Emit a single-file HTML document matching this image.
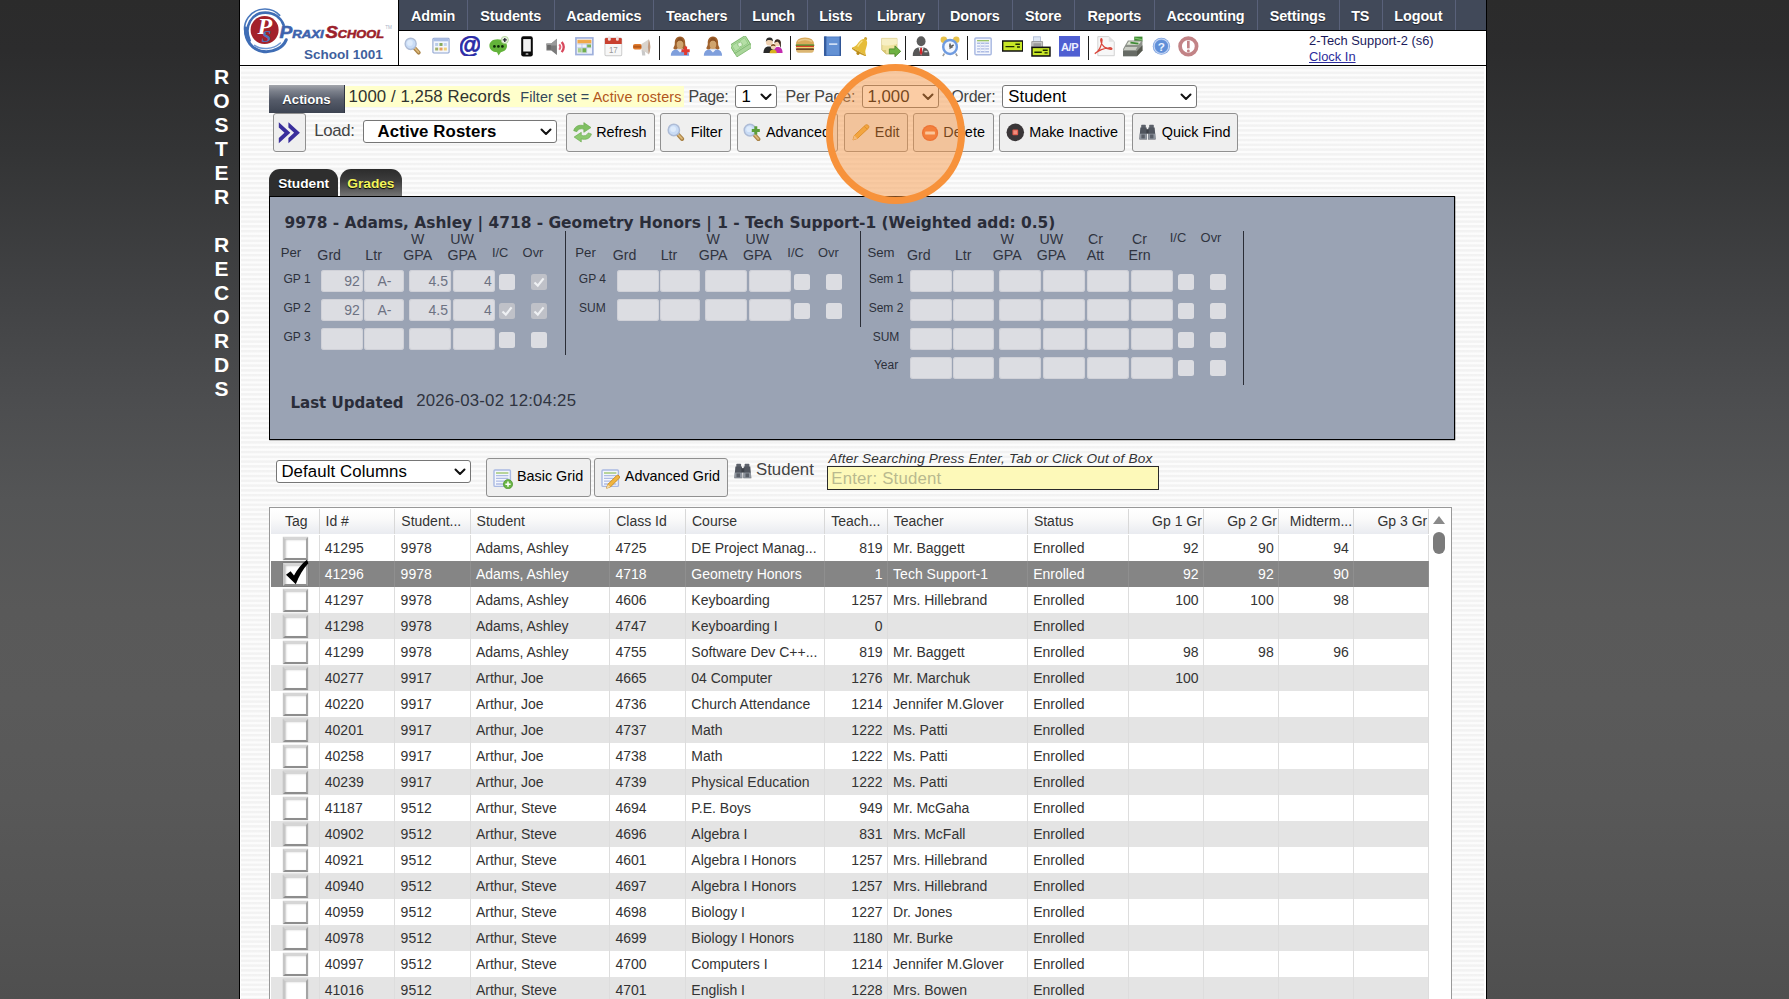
<!DOCTYPE html><html><head><meta charset="utf-8"><title>Roster Records</title><style>
*{box-sizing:border-box}
html,body{margin:0;padding:0}
body{width:1789px;height:999px;overflow:hidden;position:relative;
 font-family:"Liberation Sans",sans-serif;color:#333;
 background:linear-gradient(to bottom,#2b2b2b 0,#2c2c2d 50px,#333435 150px,#424345 300px,#4c4d4f 400px,#545556 500px,#595959 610px,#5a5a5a 700px,#585858 800px,#545454 900px,#4f4f4f 999px);}
.abs,.abs-all *{position:absolute}
div,span,svg,i,b{position:absolute;white-space:nowrap}
#wrap{left:239px;top:0;width:1248px;height:999px;border-left:1px solid #000;border-right:1px solid #000;
 background:#fff repeating-linear-gradient(to bottom,#f2f2f2 0,#f3f3f3 1.6px,#fcfcfc 2.6px,#fcfcfc 4px,#f2f2f2 4.8px);}
#wrapin{left:240px;top:66px;width:1px;height:933px;background:#fff}
#wrapin2{left:1484px;top:66px;width:2px;height:933px;background:#fff}
#hdr{left:240px;top:0;width:1246px;height:66px;background:#fff;border-bottom:1px solid #000}
#nav{left:398px;top:0;width:1088px;height:31px;background:#414959;border-left:1px solid #000;border-bottom:1px solid #000}
#navv{left:398px;top:0;width:1px;height:65px;background:#000}
.nv{top:0;height:30px;line-height:32px;text-align:center;color:#fff;font-weight:bold;font-size:14.4px;letter-spacing:-.1px;border-right:1px solid #59617a;text-shadow:0 1px 1px rgba(0,0,0,.5)}
.sep{top:37px;width:1px;height:19px;background:#222}
.ic{width:20px;height:20px;top:36px}
.lbl{font-size:16.8px;color:#444;line-height:22px}
.lb2{font-size:16px;color:#444;line-height:22px;letter-spacing:-.4px}
.sel{background:#fff;border:1px solid #767676;border-radius:3px;height:23px;top:85px;font-size:16.8px;line-height:22px;color:#000}
.sel span{left:5px;top:0;position:absolute}
.sel svg{right:4px;top:7.3px;width:12px;height:8px}
.btn{top:113px;height:39px;background:#efefef;border:1px solid #909090;border-radius:3px;font-size:14.4px;color:#000;line-height:36px}
.btn span{top:0}
.btn svg{top:9px;width:18px;height:18px}
.gl{font-size:14.2px;color:#30343f;line-height:16px;text-align:center}
.gt{font-size:13.2px;color:#2c303a;line-height:16px;text-align:center}
.gr{font-size:12px;color:#2c303a;line-height:16px;text-align:center}
.gs{font-size:12.9px;color:#30343f;line-height:16px;text-align:center}
.gi{height:22px;background:#dcdde2;border-radius:3px;font-size:14px;color:#6d7282;line-height:22px;text-align:right;padding-right:3.4px;box-shadow:inset 0 0 0 1px rgba(200,202,210,.6)}
.gc{width:16px;height:16px;background:#dcdde2;border-radius:2.5px}
.gck{background:#bfc1c8}
.vs{width:1px;background:#2a2d36}
#grid{left:269px;top:507px;width:1183px;height:500px;background:#fff;border:1px solid #999}
.hc{top:509px;height:25px;line-height:25px;font-size:14px;color:#333;border-right:1px solid #d8d8d8;background:linear-gradient(to bottom,#fff 0,#fafafa 40%,#e9ebf0 100%)}
.row{left:271px;width:1158px;height:26px}
.row.alt{background:#e4e4e4}
.row.sel2{background:#858585}
.c{top:0;height:26px;line-height:26px;font-size:14px;color:#333;border-right:1px solid #ddd;overflow:hidden}
.sel2 .c{color:#fff;border-right-color:#8f8f8f}
.r{text-align:right;padding-right:4.3px}
.l{padding-left:5.3px}
.cb{left:12px;top:2px;width:25px;height:23px;background:#fff;border:2.5px solid;border-color:#d6d6d6 #a4a4a4 #8d8d8d #c6c6c6;box-shadow:inset 1px 1px 2px rgba(0,0,0,.22),0 0 1px rgba(0,0,0,.25)}
</style></head><body>
<div id="wrap"></div><div id="wrapin"></div><div id="wrapin2"></div>
<div id="hdr"></div>
<div id="nav"></div><div id="navv"></div>
<div class="nv" style="left:399.0px;width:69.2px">Admin</div>
<div class="nv" style="left:467.2px;width:88.1px">Students</div>
<div class="nv" style="left:554.3px;width:99.9px">Academics</div>
<div class="nv" style="left:653.2px;width:88.1px">Teachers</div>
<div class="nv" style="left:740.3px;width:67.7px">Lunch</div>
<div class="nv" style="left:807.0px;width:58.5px">Lists</div>
<div class="nv" style="left:864.5px;width:74.1px">Library</div>
<div class="nv" style="left:937.6px;width:75.6px">Donors</div>
<div class="nv" style="left:1012.2px;width:63.1px">Store</div>
<div class="nv" style="left:1074.3px;width:81.0px">Reports</div>
<div class="nv" style="left:1154.3px;width:103.4px">Accounting</div>
<div class="nv" style="left:1256.7px;width:83.0px">Settings</div>
<div class="nv" style="left:1338.7px;width:44.1px">TS</div>
<div class="nv" style="left:1381.8px;width:74.2px">Logout</div>
<svg viewBox="0 0 160 60" style="left:240px;top:4px;width:160px;height:60px"><path d="M6.2 33 C0.6 18 11 5 25 5 C31 5 36 7.2 39.6 11.4" fill="none" stroke="#4a78bd" stroke-width="1.7" stroke-linecap="round"/><path d="M9.6 36.5 C3.4 22 12 8.6 25.4 8.6 C34 8.6 41 13.6 43.6 21" fill="none" stroke="#3f6db5" stroke-width="2.6" stroke-linecap="round"/><path d="M5.6 24 C4.6 36 12 46.4 24 47.6 C34 48.4 43 43.6 46.2 35.8" fill="none" stroke="#3f6db5" stroke-width="3.1" stroke-linecap="round"/><path d="M14.6 41.4 C21 46 33 45.6 40.4 39" fill="none" stroke="#6f97d2" stroke-width="1.5" stroke-linecap="round"/><circle cx="24.6" cy="26" r="14" fill="#a3212a"/><text x="17.6" y="30" font-family="Liberation Serif, serif" font-style="italic" font-weight="bold" font-size="24" fill="#fff">P</text><text x="21.6" y="37.8" font-family="Liberation Serif, serif" font-style="italic" font-weight="bold" font-size="17.5" fill="#4f74ba">S</text><text x="39.4" y="34.4" textLength="44.4" lengthAdjust="spacingAndGlyphs" font-family="Liberation Sans, sans-serif" font-style="italic" font-weight="bold" fill="#3d63ad" stroke="#3d63ad" stroke-width=".55"><tspan font-size="16.8">P</tspan><tspan font-size="11.6">RAXI</tspan></text><text x="85.4" y="34.4" textLength="58.6" lengthAdjust="spacingAndGlyphs" font-family="Liberation Sans, sans-serif" font-style="italic" font-weight="bold" fill="#9c1f2b" stroke="#9c1f2b" stroke-width=".55"><tspan font-size="16.8">S</tspan><tspan font-size="11.6">CHOOL</tspan></text><text x="145.2" y="25.4" font-family="Liberation Sans, sans-serif" font-size="4.6" fill="#a9b4c8">TM</text></svg><div style="left:304px;top:47px;font-size:13.5px;font-weight:bold;color:#3f5f9d;line-height:16px">School 1001</div>
<svg viewBox="0 0 20 20" preserveAspectRatio="none" style="left:404.3px;top:37.1px;width:17.5px;height:17.9px"><path d="M11.6 11.8 L16.8 17.4" stroke="#a98246" stroke-width="4.4" stroke-linecap="round"/><path d="M12 12 L16.6 17" stroke="#dcb878" stroke-width="2" stroke-linecap="round"/><circle cx="7.6" cy="7.6" r="6.3" fill="#c9dcf6" stroke="#aebcd6" stroke-width="1.6"/><circle cx="6.8" cy="6.6" r="3.2" fill="#deebfb"/></svg><svg viewBox="0 0 20 20" preserveAspectRatio="none" style="left:432.0px;top:37.0px;width:18.0px;height:17.2px"><rect x="1" y="1.5" width="18" height="17" rx="1" fill="#f4f7fc" stroke="#8ea3cf" stroke-width="1.2"/><rect x="1.6" y="2" width="16.8" height="3" fill="#a9bde4"/><rect x="3.5" y="7" width="3.4" height="3.4" fill="#b8cbe8"/><rect x="8.3" y="7" width="3.4" height="3.4" fill="#86a95a"/><rect x="13.1" y="7" width="3.4" height="3.4" fill="#c5d4ee"/><rect x="3.5" y="12.3" width="3.4" height="3.4" fill="#9fb26a"/><rect x="8.3" y="12.3" width="3.4" height="3.4" fill="#e7a05b"/><rect x="13.1" y="12.3" width="3.4" height="3.4" fill="#f0d27a"/></svg><svg viewBox="0 0 20 20" preserveAspectRatio="none" style="left:459.9px;top:36.0px;width:20.0px;height:20.0px"><text x="10" y="16.5" text-anchor="middle" font-family="Liberation Sans, sans-serif" font-weight="bold" font-size="23" fill="#2b2ba6" stroke="#2b2ba6" stroke-width=".7">@</text></svg><svg viewBox="0 0 20 20" preserveAspectRatio="none" style="left:488.8px;top:36.3px;width:20.0px;height:19.7px"><path d="M8.6 3.4 C3.2 3.4 0.4 6.4 0.4 10 C0.4 13.6 3.4 16.4 8 16.6 L9.6 19.8 L11.8 16.4 C15.8 15.8 18 13.4 18 10 C18 6.4 14.2 3.4 8.6 3.4 Z" fill="#63b33a"/><circle cx="5.4" cy="10.6" r="1.35" fill="#0d2a08"/><circle cx="9.4" cy="10.6" r="1.35" fill="#0d2a08"/><circle cx="13.4" cy="10.6" r="1.35" fill="#0d2a08"/><circle cx="15.8" cy="4" r="3.6" fill="#e9f4df" stroke="#a8cf8e" stroke-width=".8"/><path d="M15.8 2 V6 M13.8 4 H17.8" stroke="#223" stroke-width="1.3"/></svg><svg viewBox="0 0 20 20" preserveAspectRatio="none" style="left:517.0px;top:35.9px;width:20.0px;height:20.7px"><rect x="4.2" y="0.3" width="11.6" height="19.6" rx="2.2" fill="#0a0a0a"/><rect x="6.2" y="3" width="7.6" height="12" fill="#f2f2f2"/><rect x="8.6" y="16.6" width="2.8" height="1.6" rx=".5" fill="#bbb"/></svg><svg viewBox="0 0 20 20" preserveAspectRatio="none" style="left:546.0px;top:36.5px;width:21.0px;height:20.0px"><path d="M0.4 6.4 H5 L10.4 1.8 V18 L5 13.6 H0.4 Z" fill="#7a7a7a"/><path d="M0.4 6.4 H5 L10.4 1.8 V8.6 H0.4 Z" fill="#9a9a9a"/><rect x="1.2" y="8" width="3.4" height="4.4" fill="#6a6a6a"/><path d="M12.6 7.4 Q14.8 10 12.6 12.8" fill="none" stroke="#e2697a" stroke-width="1.8"/><path d="M15 5 Q18.8 10 15 15.2" fill="none" stroke="#d8485c" stroke-width="2.2"/></svg><svg viewBox="0 0 20 20" preserveAspectRatio="none" style="left:575.2px;top:37.0px;width:18.8px;height:18.5px"><rect x="1" y="1" width="18" height="18" fill="#eef2fa" stroke="#9fb0dc" stroke-width="1.8"/><rect x="2.6" y="3" width="14.8" height="4" fill="#f0a84a"/><path d="M2.6 7.6 H17.4 M2.6 11.6 H17.4 M7.4 7.4 V17.4 M12.4 7.4 V17.4" stroke="#b9c7e8" stroke-width=".9"/><rect x="12.9" y="8.1" width="4.2" height="3.1" fill="#79b356"/><rect x="7.9" y="12.1" width="4.1" height="4.6" fill="#6fae4f"/><rect x="3" y="12.1" width="4" height="4.6" fill="#a9cf8f"/></svg><svg viewBox="0 0 20 20" preserveAspectRatio="none" style="left:604.2px;top:36.3px;width:18.7px;height:20.3px"><rect x="1" y="2" width="18" height="17.5" rx="1.2" fill="#f7f7f7" stroke="#c9c9c9" stroke-width="1"/><path d="M1 3.2 Q1 2 2.2 2 H17.8 Q19 2 19 3.2 V7.8 H1 Z" fill="#c9402f"/><rect x="4.2" y="0.3" width="3" height="4.4" rx="1.2" fill="#f3dede"/><rect x="12.8" y="0.3" width="3" height="4.4" rx="1.2" fill="#f3dede"/><text x="10" y="16.6" text-anchor="middle" font-family="Liberation Sans, sans-serif" font-size="8.5" fill="#999">17</text></svg><svg viewBox="0 0 20 20" preserveAspectRatio="none" style="left:631.9px;top:36.8px;width:20.0px;height:19.8px"><path d="M9.5 13 L10.2 18.8 H13.4 L12.6 13 Z" fill="#c9c9c9"/><rect x="1" y="7" width="9" height="5.6" rx="2" fill="#e07a2c"/><path d="M1.4 9.8 H9.8" stroke="#b85a1a" stroke-width="2.2"/><path d="M9.5 7 L17 2.2 Q19.6 9.8 17 17.6 L9.5 12.6 Z" fill="#d9d3cc"/><path d="M16.8 2.2 Q19.8 9.8 16.8 17.6 Q15 9.8 16.8 2.2 Z" fill="#c09a80"/></svg><svg viewBox="0 0 20 20" preserveAspectRatio="none" style="left:670.0px;top:36.0px;width:20.0px;height:20.3px"><path d="M0.8 19.4 Q0.8 14.2 5.5 13.2 L14.5 13.2 Q19.2 14.2 19.2 19.4 Z" fill="#7f9fdc"/><path d="M7 13.2 L10 16.2 L13 13.2 Z" fill="#f1f3fa"/><path d="M10 0.4 C5.6 0.4 4.6 4.4 4.8 7.6 C4.9 10 3.2 11 3.4 12.4 C4.2 13.8 6.6 13.4 7.4 12.4 L12.6 12.4 C13.4 13.4 15.8 13.8 16.6 12.4 C16.8 11 15.1 10 15.2 7.6 C15.4 4.4 14.4 0.4 10 0.4 Z" fill="#a0622d"/><ellipse cx="10" cy="8.4" rx="3.3" ry="4.3" fill="#cfa46e"/><path d="M6.4 6.6 Q10 2.2 13.6 6.6 Q12.5 1.6 10 1.6 Q7.5 1.6 6.4 6.6 Z" fill="#8a4f22"/><path d="M15.6 10.4 V18.6 M11.5 14.5 H19.7" stroke="#e03a30" stroke-width="3"/></svg><svg viewBox="0 0 20 20" preserveAspectRatio="none" style="left:703.0px;top:36.0px;width:19.9px;height:20.3px"><path d="M0.8 19.4 Q0.8 14.2 5.5 13.2 L14.5 13.2 Q19.2 14.2 19.2 19.4 Z" fill="#7f9fdc"/><path d="M7 13.2 L10 16.2 L13 13.2 Z" fill="#f1f3fa"/><path d="M10 0.4 C5.6 0.4 4.6 4.4 4.8 7.6 C4.9 10 3.2 11 3.4 12.4 C4.2 13.8 6.6 13.4 7.4 12.4 L12.6 12.4 C13.4 13.4 15.8 13.8 16.6 12.4 C16.8 11 15.1 10 15.2 7.6 C15.4 4.4 14.4 0.4 10 0.4 Z" fill="#a0622d"/><ellipse cx="10" cy="8.4" rx="3.3" ry="4.3" fill="#cfa46e"/><path d="M6.4 6.6 Q10 2.2 13.6 6.6 Q12.5 1.6 10 1.6 Q7.5 1.6 6.4 6.6 Z" fill="#8a4f22"/></svg><svg viewBox="0 0 20 20" preserveAspectRatio="none" style="left:731.1px;top:36.3px;width:20.0px;height:20.3px"><g transform="rotate(-32 10 10)"><rect x="1" y="7.4" width="18" height="9.4" fill="#a9d59a" stroke="#7fb870" stroke-width=".8"/><rect x="1" y="3.4" width="18" height="9.4" fill="#b5dfa6" stroke="#7fb870" stroke-width=".9"/><rect x="2.6" y="4.9" width="14.8" height="6.4" fill="none" stroke="#8cc47c" stroke-width=".7"/><circle cx="10" cy="8.1" r="2.3" fill="#e4f4dc" stroke="#7fb870" stroke-width=".7"/></g></svg><svg viewBox="0 0 20 20" preserveAspectRatio="none" style="left:762.8px;top:35.0px;width:20.0px;height:20.4px"><path d="M0.4 17.6 Q0.6 11.8 4.6 11.2 L8.2 11.2 Q11.2 12 11 17.6 Z" fill="#2a2a2a"/><path d="M10.4 17.6 Q10.6 12.6 13.6 11.8 L16 11.8 Q19.6 12.6 19.6 17.6 Z" fill="#c32bb0"/><circle cx="6.4" cy="6.8" r="3.5" fill="#f0d2b2"/><path d="M2.8 6.6 Q3 2.2 6.8 2.4 Q10 2.6 9.9 6.2 Q8 4.6 5.4 5 Q3.6 5.2 2.8 6.6 Z" fill="#2d2d2d"/><circle cx="14.6" cy="8" r="3.1" fill="#f0d2b2"/><path d="M11.4 8 Q11.4 4 14.8 4.2 Q18.4 4.4 17.9 9.2 Q18.2 11.6 17.4 12.6 Q16.8 8 14.8 6.6 Q12.6 6.6 11.4 8 Z" fill="#3a2a22"/><path d="M6.6 18 Q6.8 14.8 9 14.4 L11.4 14.4 Q13.6 14.8 13.8 18 Z" fill="#d8b21e"/><circle cx="10.2" cy="11.6" r="2.5" fill="#f2d6b6"/><path d="M7.7 11.4 Q7.9 8.8 10.3 8.9 Q12.7 9 12.7 11.4 Q10.2 9.8 7.7 11.4 Z" fill="#7a4a22"/></svg><svg viewBox="0 0 20 20" preserveAspectRatio="none" style="left:795.0px;top:35.6px;width:20.0px;height:20.0px"><path d="M1 8.6 Q1 1.4 10 1.4 Q19 1.4 19 8.6 Z" fill="#d9a95a"/><path d="M3 5.4 Q10 1.6 17 5.4" stroke="#e9c98a" stroke-width="1.4" fill="none"/><rect x="0.6" y="8.2" width="18.8" height="2" rx="1" fill="#5d8a2a"/><rect x="1" y="9.8" width="18" height="1.6" fill="#d8402c"/><rect x="0.8" y="11.1" width="18.4" height="1.5" fill="#f2d46a"/><rect x="1" y="12.3" width="18" height="2" rx=".8" fill="#6a4320"/><path d="M1.2 14 H18.8 Q18.8 16.8 16.4 16.8 H3.6 Q1.2 16.8 1.2 14 Z" fill="#dcb672"/></svg><svg viewBox="0 0 20 20" preserveAspectRatio="none" style="left:821.4px;top:36.3px;width:23.0px;height:20.3px"><path d="M2.6 1.4 Q2.6 0.4 3.8 0.4 H17 V19.6 H3.8 Q2.6 19.6 2.6 18.4 Z" fill="#4f7cc4"/><rect x="2.6" y="0.4" width="2.2" height="19.2" fill="#355c9e"/><rect x="4.8" y="1.4" width="11.4" height="17.2" fill="#6391d4"/><rect x="7" y="7.2" width="7.2" height="1.6" fill="#d7e4f7"/><path d="M16.2 0.4 H17.4 V19.6 H16.2 Z" fill="#2f5596"/></svg><svg viewBox="0 0 20 20" preserveAspectRatio="none" style="left:852.2px;top:36.3px;width:19.6px;height:20.0px"><g transform="rotate(28 10 10)"><circle cx="10" cy="1.8" r="1.6" fill="#caa23a"/><path d="M10 2.4 C5.4 2.8 5.6 9 4.6 12.4 Q3.8 14.6 1.8 16 H18.2 Q16.2 14.6 15.4 12.4 C14.4 9 14.6 2.8 10 2.4 Z" fill="#e6bd3a"/><path d="M1.8 16 H18.2 V17.2 Q10 19.2 1.8 17.2 Z" fill="#c89a22"/><circle cx="10" cy="18.2" r="1.7" fill="#b98a1a"/><path d="M8 5 Q6.8 8 6.6 12.6" stroke="#f6e08a" stroke-width="1.3" fill="none"/></g></svg><svg viewBox="0 0 20 20" preserveAspectRatio="none" style="left:880.8px;top:36.6px;width:19.9px;height:20.2px"><path d="M0.8 1.4 H16 V16.8 H5.2 L0.8 12.8 Z" fill="#f0e3a0" stroke="#d2c27c" stroke-width=".9"/><path d="M0.8 1.4 H16 V7 Q8 9.6 0.8 7.6 Z" fill="#f7efc4"/><path d="M0.8 12.8 H5.2 V16.8 Z" fill="#d9c877"/><path d="M8.4 11.8 H14 V8.8 L19.8 14.2 L14 19.6 V16.6 H8.4 Z" fill="#6fb243" stroke="#4e8a2c" stroke-width=".9"/></svg><svg viewBox="0 0 20 20" preserveAspectRatio="none" style="left:912.3px;top:36.4px;width:18.2px;height:20.3px"><circle cx="10" cy="5.2" r="4.9" fill="#5c5c5c"/><path d="M0.8 19.8 Q0.8 12.6 6.6 11.4 L13.4 11.4 Q19.2 12.6 19.2 19.8 Z" fill="#575757"/><path d="M7.2 11.4 L10 19.4 L12.8 11.4 Z" fill="#f2f2f2"/><path d="M9.1 11.6 H10.9 L11.5 16.4 L10 19 L8.5 16.4 Z" fill="#d3262b"/><rect x="13.6" y="14.6" width="3.4" height="1.5" fill="#d9d9d9"/></svg><svg viewBox="0 0 20 20" preserveAspectRatio="none" style="left:940.2px;top:36.0px;width:20.1px;height:20.6px"><circle cx="3.8" cy="3.6" r="3.2" fill="#e8c24a"/><circle cx="16.2" cy="3.6" r="3.2" fill="#e8c24a"/><path d="M4.4 17 L2.8 19.6 M15.6 17 L17.2 19.6" stroke="#9a9a9a" stroke-width="1.5"/><circle cx="10" cy="10.6" r="8" fill="#6f9be0"/><circle cx="10" cy="10.6" r="5.6" fill="#f3f7fd"/><path d="M10 10.8 L13.6 8.6 M10 10.8 V7.4" stroke="#555" stroke-width="1.4"/><path d="M9.4 8.2 L13.4 10.6 L9.4 12.8 Z" fill="#666"/></svg><svg viewBox="0 0 20 20" preserveAspectRatio="none" style="left:974.4px;top:37.0px;width:18.1px;height:18.6px"><rect x="1" y="1" width="18" height="18" rx="1.2" fill="#f4f7fd" stroke="#a9b9e2" stroke-width="1.6"/><path d="M3.4 4 H16.6" stroke="#86b84a" stroke-width="1.2"/><path d="M3.4 6.8 H16.6 M3.4 9.8 H16.6 M3.4 12.8 H16.6 M3.4 15.8 H16.6" stroke="#aebce4" stroke-width="1.5"/><path d="M7.2 5.8 V17 M12 5.8 V17" stroke="#dfe6f6" stroke-width="1"/></svg><svg viewBox="0 0 20 20" preserveAspectRatio="none" style="left:1002.1px;top:36.3px;width:20.6px;height:20.0px"><rect x="0.6" y="5" width="19.6" height="10" fill="#c7e626" stroke="#111" stroke-width="1.5"/><path d="M3.4 10.6 H12 M13 8.2 H17.4 M14.6 11 H17.4" stroke="#1c2a00" stroke-width="1.4"/></svg><svg viewBox="0 0 20 20" preserveAspectRatio="none" style="left:1031.3px;top:36.0px;width:19.6px;height:20.6px"><rect x="2.6" y="0.8" width="7" height="5" fill="#dfe8f6" stroke="#a9b7d2" stroke-width=".8"/><path d="M0.8 5.4 H11.8 V12 H0.8 Z" fill="#c9c9c9" stroke="#8e8e8e" stroke-width=".8"/><rect x="2.4" y="7" width="8" height="3" fill="#9c9c9c"/><rect x="1" y="11" width="18.4" height="8.4" fill="#c7e626" stroke="#111" stroke-width="1.5"/><path d="M3.4 15.8 H11 M12 13.8 H17 M13.8 16.4 H17" stroke="#1c2a00" stroke-width="1.3"/></svg><svg viewBox="0 0 20 20" preserveAspectRatio="none" style="left:1058.9px;top:36.0px;width:21.1px;height:20.6px"><rect x="0" y="0" width="20" height="20" fill="#4f5fd2"/><text x="10" y="14.4" text-anchor="middle" font-family="Liberation Sans, sans-serif" font-weight="bold" font-size="10.5" fill="#eef0ff" letter-spacing="-.4">A/P</text></svg><svg viewBox="0 0 20 20" preserveAspectRatio="none" style="left:1093.7px;top:36.3px;width:21.1px;height:20.3px"><path d="M3.6 0.6 H14 L19.2 5.6 V19.4 H3.6 Z" fill="#f7f7f7" stroke="#cfcfcf" stroke-width=".9"/><path d="M14 0.6 V5.6 H19.2 Z" fill="#e2e2e2"/><path d="M0.8 17.4 C4.4 15.4 7.6 9.4 7.6 4.2 C7.6 2 6.2 2.2 6.4 4.4 C6.8 9 11 13.4 16.2 13.2 C17.8 12.8 16.8 11.4 14.4 11.6 C9.6 12 4 14.4 0.8 17.4 Z" fill="none" stroke="#d9453a" stroke-width="1.25"/></svg><svg viewBox="0 0 20 20" preserveAspectRatio="none" style="left:1121.9px;top:36.0px;width:21.1px;height:20.6px"><path d="M11.6 0.6 H19.4 V5.4 H11.6 Z" fill="#3e8a32"/><path d="M12.4 2 L18.8 3.6" stroke="#7cc46a" stroke-width="1.2"/><path d="M5.6 4.4 H19.4 L19.4 14 L14.2 19.6 H1 V12.6 Z" fill="#8d918a"/><path d="M6.4 5.4 H18.2 L15.6 8.6 H4.4 Z" fill="#dfe6d6"/><path d="M8 6.4 L15.6 7.4" stroke="#3f8a36" stroke-width="1.6"/><path d="M3.2 10.6 H14.6 L13 13.6 H1.6 Z" fill="#c9ccc4"/><path d="M1 14.6 H14.2 V19.6 H1 Z" fill="#676b65"/><path d="M14.2 14.6 L19.4 9 V14 L14.2 19.6 Z" fill="#55584f"/></svg><svg viewBox="0 0 20 20" preserveAspectRatio="none" style="left:1152.0px;top:37.0px;width:18.8px;height:18.5px"><circle cx="10" cy="10" r="9.2" fill="#7ea3e0"/><circle cx="10" cy="10" r="7.8" fill="none" stroke="#c5d6f4" stroke-width="1.2"/><circle cx="10" cy="10" r="6.8" fill="#5f8fd8"/><text x="10" y="14.6" text-anchor="middle" font-family="Liberation Sans, sans-serif" font-weight="bold" font-size="12.5" fill="#eaf2ff">?</text></svg><svg viewBox="0 0 20 20" preserveAspectRatio="none" style="left:1178.2px;top:36.0px;width:20.7px;height:20.6px"><circle cx="10" cy="10" r="8" fill="#fff" stroke="#c28386" stroke-width="3.6"/><path d="M10 4.6 V12" stroke="#c28386" stroke-width="2.6"/><circle cx="10" cy="14.6" r="1.4" fill="#c28386"/></svg><div style="left:658.7px;top:36px;width:1.3px;height:24px;background:#1d1d1d"></div><div style="left:789.6px;top:36px;width:1.3px;height:24px;background:#1d1d1d"></div><div style="left:904.8px;top:36px;width:1.3px;height:24px;background:#1d1d1d"></div><div style="left:966.8px;top:36px;width:1.3px;height:24px;background:#1d1d1d"></div><div style="left:1087.6px;top:36px;width:1.3px;height:24px;background:#1d1d1d"></div>
<div style="left:1309px;top:33px;font-size:12.9px;color:#1b1b5c;line-height:16px">2-Tech Support-2 (s6)</div>
<div style="left:1309px;top:49px;font-size:12.9px;color:#2c2c9c;line-height:16px;text-decoration:underline">Clock In</div>
<div style="left:211.5px;width:20px;top:64.6px;line-height:24px;text-align:center;color:#fff;font-weight:bold;font-size:21px;white-space:normal;word-break:break-all">ROSTER<br><br>RECORDS</div>
<div style="left:269px;top:85px;width:76px;height:27.5px;background:linear-gradient(to bottom,#a3a6ac 0,#7b808b 22%,#555b69 55%,#3d4452 100%);border-right:1px solid #2f3542;color:#fff;font-weight:bold;font-size:13.2px;line-height:30px;text-align:center;text-shadow:0 1px 1px rgba(0,0,0,.6)">Actions</div>
<div style="left:345px;top:86px;width:338.5px;height:20.6px;background:#ffffcb"></div>
<div style="left:348.6px;top:85.5px;font-size:16.8px;letter-spacing:.07px;color:#2f332f;line-height:22px">1000 / 1,258 Records</div>
<div style="left:520.3px;top:85.6px;font-size:14.4px;letter-spacing:.12px;color:#33475b;line-height:22px">Filter set = <span style="position:static;color:#b1561c">Active rosters</span></div>
<div class="lb2" style="left:688.6px;top:85.5px">Page:</div>
<div class="sel" style="left:735.4px;width:41.4px"><span>1</span><svg viewBox="0 0 12 8"><path d="M1.5 1.5 L6 6 L10.5 1.5" fill="none" stroke="#111" stroke-width="2" stroke-linecap="round" stroke-linejoin="round"/></svg></div>
<div class="lb2" style="left:785.6px;top:85.5px;letter-spacing:-.15px">Per Page:</div>
<div class="sel" style="left:861.5px;width:77.8px"><span>1,000</span><svg viewBox="0 0 12 8"><path d="M1.5 1.5 L6 6 L10.5 1.5" fill="none" stroke="#111" stroke-width="2" stroke-linecap="round" stroke-linejoin="round"/></svg></div>
<div class="lb2" style="left:951.3px;top:85.5px;letter-spacing:-.2px">Order:</div>
<div class="sel" style="left:1002.3px;width:194.4px"><span>Student</span><svg viewBox="0 0 12 8"><path d="M1.5 1.5 L6 6 L10.5 1.5" fill="none" stroke="#111" stroke-width="2" stroke-linecap="round" stroke-linejoin="round"/></svg></div>
<div class="btn" style="left:273px;width:33px"><svg viewBox="0 0 33 39" style="left:-1px;top:-1px;width:33px;height:39px"><path d="M5.8 9.2 L17.3 19.7 L5.8 30.2 V24.9 L11.5 19.7 L5.8 14.5 Z M15.4 9.2 L26.9 19.7 L15.4 30.2 V24.9 L21.1 19.7 L15.4 14.5 Z" fill="#3a2f9c"/></svg></div>
<div class="lbl" style="left:314.3px;top:120.3px;letter-spacing:-.35px">Load:</div>
<div class="sel" style="left:363.4px;width:194.1px;top:120px;font-weight:bold"><span style="left:13.2px;letter-spacing:.1px">Active Rosters</span><svg viewBox="0 0 12 8"><path d="M1.5 1.5 L6 6 L10.5 1.5" fill="none" stroke="#111" stroke-width="2" stroke-linecap="round" stroke-linejoin="round"/></svg></div>
<div class="btn" style="left:566.2px;width:88.5px"><span style="left:29.0px">Refresh</span></div>
<svg viewBox="0 0 20 20" preserveAspectRatio="none" style="left:571.9px;top:122.1px;width:21.1px;height:20.6px"><path d="M1.6 8.4 C2.6 4 7 2.2 11.2 3.6 L11.2 0.6 L18 5.4 L11.2 10 V7 C8 6 5.6 7 4.6 9.4 Z" fill="#7fbf62" stroke="#66a84c" stroke-width=".6"/><path d="M18.4 11.6 C17.4 16 13 17.8 8.8 16.4 L8.8 19.4 L2 14.6 L8.8 10 V13 C12 14 14.4 13 15.4 10.6 Z" fill="#8cc96f" stroke="#66a84c" stroke-width=".6"/></svg>
<div class="btn" style="left:660.3px;width:70.5px"><span style="left:29.4px">Filter</span></div>
<svg viewBox="0 0 20 20" preserveAspectRatio="none" style="left:667.0px;top:122.6px;width:18.0px;height:18.4px"><path d="M11.6 11.8 L16.8 17.4" stroke="#a98246" stroke-width="4.4" stroke-linecap="round"/><path d="M12 12 L16.6 17" stroke="#dcb878" stroke-width="2" stroke-linecap="round"/><circle cx="7.6" cy="7.6" r="6.3" fill="#c9dcf6" stroke="#aebcd6" stroke-width="1.6"/><circle cx="6.8" cy="6.6" r="3.2" fill="#deebfb"/></svg>
<div class="btn" style="left:737.3px;width:100.9px"><span style="left:27.7px">Advanced</span></div>
<svg viewBox="0 0 20 20" preserveAspectRatio="none" style="left:743.3px;top:122.6px;width:18.3px;height:18.6px"><path d="M11.6 11.8 L16.8 17.4" stroke="#a98246" stroke-width="4.4" stroke-linecap="round"/><path d="M12 12 L16.6 17" stroke="#dcb878" stroke-width="2" stroke-linecap="round"/><circle cx="7.6" cy="7.6" r="6.3" fill="#c9dcf6" stroke="#aebcd6" stroke-width="1.6"/><circle cx="6.8" cy="6.6" r="3.2" fill="#deebfb"/><path d="M14 3.6 V12.4 M9.6 8 H18.4" stroke="#5c9e3a" stroke-width="3.2"/></svg>
<div class="btn" style="left:844.1px;width:63.5px"><span style="left:29.7px">Edit</span></div>
<svg viewBox="0 0 20 20" preserveAspectRatio="none" style="left:850.8px;top:123.2px;width:19.6px;height:18.4px"><path d="M2 18.4 L3.4 13.6 L14.6 2.4 Q16 1.2 17.6 2.6 Q19 4.2 17.8 5.6 L6.6 16.8 Z" fill="#f0b540" stroke="#c98a1e" stroke-width="1"/><path d="M2 18.4 L3.4 13.6 L6.6 16.8 Z" fill="#f3dcae"/><path d="M13.4 3.6 L16.6 6.8" stroke="#c98a1e" stroke-width="1"/></svg>
<div class="btn" style="left:913.2px;width:80.5px"><span style="left:29.1px">Delete</span></div>
<svg viewBox="0 0 20 20" preserveAspectRatio="none" style="left:920.5px;top:123.9px;width:18.1px;height:18.0px"><circle cx="10" cy="10" r="9" fill="#e4582e"/><circle cx="10" cy="10" r="7.6" fill="#f0703c"/><rect x="4.6" y="8.2" width="10.8" height="3.6" rx=".8" fill="#fff3ec"/></svg>
<div class="btn" style="left:999.4px;width:126.1px"><span style="left:28.8px">Make Inactive</span></div>
<svg viewBox="0 0 20 20" preserveAspectRatio="none" style="left:1006.2px;top:122.9px;width:18.6px;height:18.7px"><circle cx="10" cy="10" r="9.4" fill="#3a3638"/><rect x="6.9" y="6.9" width="6.2" height="6.2" rx="1" fill="#e0584a"/><rect x="8" y="8" width="4" height="4" fill="#ef8d7c"/></svg>
<div class="btn" style="left:1132.3px;width:106.1px"><span style="left:28.4px">Quick Find</span></div>
<svg viewBox="0 0 20 20" preserveAspectRatio="none" style="left:1138.9px;top:124.2px;width:17.0px;height:16.2px"><rect x="2.6" y="1" width="5.4" height="4.6" rx=".8" fill="#5d626b"/><rect x="12" y="1" width="5.4" height="4.6" rx=".8" fill="#5d626b"/><path d="M1.6 4.4 H9 L9.4 19 H0.4 Z" fill="#50555e"/><path d="M11 4.4 H18.4 L19.6 19 H10.6 Z" fill="#50555e"/><rect x="8.4" y="6.4" width="3.2" height="5.6" fill="#3d4149"/><rect x="0.8" y="12" width="8.4" height="6.6" fill="#8f959e"/><rect x="10.8" y="12" width="8.4" height="6.6" fill="#8f959e"/><rect x="2.8" y="13" width="4" height="4.8" fill="#5a5f68"/><rect x="13" y="13" width="4" height="4.8" fill="#5a5f68"/></svg>
<div style="left:826px;top:64px;width:139px;height:139.6px;border-radius:50%;border:7.7px solid #f7923b;background:rgba(247,146,62,.47);z-index:50"></div>
<div style="left:269px;top:169px;width:69.3px;height:27px;background:#2e2e2e;border-radius:11px 11px 0 0;color:#fff;font-weight:bold;font-size:13.7px;line-height:29px;text-align:center;text-shadow:0 1px 1px #000">Student</div>
<div style="left:339.7px;top:169px;width:62.4px;height:27px;background:linear-gradient(to bottom,#2c2c2c 0,#3d3d3d 45%,#747474 100%);border-radius:11px 11px 0 0;color:#f4f45a;font-weight:bold;font-size:13.7px;line-height:29px;text-align:center;text-shadow:0 1px 1px #000">Grades</div>
<div style="left:269px;top:196px;width:1186.4px;height:244.2px;background:#9aa3b4;border:1px solid #000;box-shadow:.4px .4px 0 rgba(0,0,0,.55)"></div>
<div style="left:284.5px;top:213px;font-family:'DejaVu Sans','Liberation Sans',sans-serif;font-weight:bold;font-size:15.42px;line-height:20px;color:#2a2d39">9978 - Adams, Ashley | 4718 - Geometry Honors | 1 - Tech Support-1 (Weighted add: 0.5)</div>
<div class="gt" style="left:276.0px;width:30.0px;top:244.5px">Per</div>
<div class="gl" style="left:309.2px;width:40.0px;top:246.5px">Grd</div>
<div class="gl" style="left:361.6px;width:24.0px;top:246.5px">Ltr</div>
<div class="gl" style="left:397.7px;width:40.0px;top:231.0px">W</div>
<div class="gl" style="left:397.7px;width:40.0px;top:246.5px">GPA</div>
<div class="gl" style="left:442.0px;width:40.0px;top:231.0px">UW</div>
<div class="gl" style="left:442.0px;width:40.0px;top:246.5px">GPA</div>
<div class="gs" style="left:490.2px;width:20.0px;top:245.0px">I/C</div>
<div class="gs" style="left:518.0px;width:30.0px;top:245.0px">Ovr</div>
<div class="gr" style="left:277.0px;width:40.0px;top:270.9px">GP 1</div>
<div class="gi" style="left:321.3px;width:42px;top:270.4px;">92</div>
<div class="gi" style="left:364.4px;width:40px;top:270.4px;text-align:center;padding-right:0;">A-</div>
<div class="gi" style="left:409.4px;width:42px;top:270.4px;">4.5</div>
<div class="gi" style="left:453.2px;width:42px;top:270.4px;">4</div>
<div class="gc" style="left:499.4px;top:274.0px"></div>
<div class="gc gck" style="left:531.4px;top:274.0px"><svg viewBox="0 0 16 16" style="left:0;top:0;width:16px;height:16px"><path d="M3.5 8.5 L6.8 11.6 L12.6 4.4" fill="none" stroke="#eef0f3" stroke-width="2.2"/></svg></div>
<div class="gr" style="left:277.0px;width:40.0px;top:299.7px">GP 2</div>
<div class="gi" style="left:321.3px;width:42px;top:299.2px;">92</div>
<div class="gi" style="left:364.4px;width:40px;top:299.2px;text-align:center;padding-right:0;">A-</div>
<div class="gi" style="left:409.4px;width:42px;top:299.2px;">4.5</div>
<div class="gi" style="left:453.2px;width:42px;top:299.2px;">4</div>
<div class="gc gck" style="left:499.4px;top:302.8px"><svg viewBox="0 0 16 16" style="left:0;top:0;width:16px;height:16px"><path d="M3.5 8.5 L6.8 11.6 L12.6 4.4" fill="none" stroke="#eef0f3" stroke-width="2.2"/></svg></div>
<div class="gc gck" style="left:531.4px;top:302.8px"><svg viewBox="0 0 16 16" style="left:0;top:0;width:16px;height:16px"><path d="M3.5 8.5 L6.8 11.6 L12.6 4.4" fill="none" stroke="#eef0f3" stroke-width="2.2"/></svg></div>
<div class="gr" style="left:277.0px;width:40.0px;top:328.5px">GP 3</div>
<div class="gi" style="left:321.3px;width:42px;top:328.0px;"></div>
<div class="gi" style="left:364.4px;width:40px;top:328.0px;text-align:center;padding-right:0;"></div>
<div class="gi" style="left:409.4px;width:42px;top:328.0px;"></div>
<div class="gi" style="left:453.2px;width:42px;top:328.0px;"></div>
<div class="gc" style="left:499.4px;top:331.6px"></div>
<div class="gc" style="left:531.4px;top:331.6px"></div>
<div class="gt" style="left:570.6px;width:30.0px;top:244.5px">Per</div>
<div class="gl" style="left:604.6px;width:40.0px;top:246.5px">Grd</div>
<div class="gl" style="left:657.0px;width:24.0px;top:246.5px">Ltr</div>
<div class="gl" style="left:693.1px;width:40.0px;top:231.0px">W</div>
<div class="gl" style="left:693.1px;width:40.0px;top:246.5px">GPA</div>
<div class="gl" style="left:737.4px;width:40.0px;top:231.0px">UW</div>
<div class="gl" style="left:737.4px;width:40.0px;top:246.5px">GPA</div>
<div class="gs" style="left:785.6px;width:20.0px;top:245.0px">I/C</div>
<div class="gs" style="left:813.4px;width:30.0px;top:245.0px">Ovr</div>
<div class="gr" style="left:572.4px;width:40.0px;top:270.9px">GP 4</div>
<div class="gi" style="left:616.7px;width:42px;top:270.4px;"></div>
<div class="gi" style="left:659.8px;width:40px;top:270.4px;text-align:center;padding-right:0;"></div>
<div class="gi" style="left:704.8px;width:42px;top:270.4px;"></div>
<div class="gi" style="left:748.6px;width:42px;top:270.4px;"></div>
<div class="gc" style="left:794.0px;top:274.0px"></div>
<div class="gc" style="left:826.0px;top:274.0px"></div>
<div class="gr" style="left:572.4px;width:40.0px;top:299.7px">SUM</div>
<div class="gi" style="left:616.7px;width:42px;top:299.2px;"></div>
<div class="gi" style="left:659.8px;width:40px;top:299.2px;text-align:center;padding-right:0;"></div>
<div class="gi" style="left:704.8px;width:42px;top:299.2px;"></div>
<div class="gi" style="left:748.6px;width:42px;top:299.2px;"></div>
<div class="gc" style="left:794.0px;top:302.8px"></div>
<div class="gc" style="left:826.0px;top:302.8px"></div>
<div class="vs" style="left:565px;top:231px;height:124px"></div>
<div class="vs" style="left:860px;top:231px;height:96px"></div>
<div class="vs" style="left:1243px;top:231px;height:154px"></div>
<div class="gt" style="left:863.0px;width:36.0px;top:244.5px">Sem</div>
<div class="gl" style="left:893.9px;width:50.0px;top:246.5px">Grd</div>
<div class="gl" style="left:938.2px;width:50.0px;top:246.5px">Ltr</div>
<div class="gl" style="left:982.3px;width:50.0px;top:231.0px">W</div>
<div class="gl" style="left:982.3px;width:50.0px;top:246.5px">GPA</div>
<div class="gl" style="left:1026.3px;width:50.0px;top:231.0px">UW</div>
<div class="gl" style="left:1026.3px;width:50.0px;top:246.5px">GPA</div>
<div class="gl" style="left:1070.4px;width:50.0px;top:231.0px">Cr</div>
<div class="gl" style="left:1070.4px;width:50.0px;top:246.5px">Att</div>
<div class="gl" style="left:1114.6px;width:50.0px;top:231.0px">Cr</div>
<div class="gl" style="left:1114.6px;width:50.0px;top:246.5px">Ern</div>
<div class="gs" style="left:1168.0px;width:20.0px;top:230.0px">I/C</div>
<div class="gs" style="left:1196.0px;width:30.0px;top:230.0px">Ovr</div>
<div class="gr" style="left:861.0px;width:50.0px;top:270.9px">Sem 1</div>
<div class="gi" style="left:910.3px;width:42px;top:270.4px"></div>
<div class="gi" style="left:953.4px;width:41px;top:270.4px"></div>
<div class="gi" style="left:999.3px;width:42px;top:270.4px"></div>
<div class="gi" style="left:1043.3px;width:42px;top:270.4px"></div>
<div class="gi" style="left:1087.3px;width:42px;top:270.4px"></div>
<div class="gi" style="left:1131.4px;width:42px;top:270.4px"></div>
<div class="gc" style="left:1177.5px;top:274.0px"></div>
<div class="gc" style="left:1209.8px;top:274.0px"></div>
<div class="gr" style="left:861.0px;width:50.0px;top:299.7px">Sem 2</div>
<div class="gi" style="left:910.3px;width:42px;top:299.2px"></div>
<div class="gi" style="left:953.4px;width:41px;top:299.2px"></div>
<div class="gi" style="left:999.3px;width:42px;top:299.2px"></div>
<div class="gi" style="left:1043.3px;width:42px;top:299.2px"></div>
<div class="gi" style="left:1087.3px;width:42px;top:299.2px"></div>
<div class="gi" style="left:1131.4px;width:42px;top:299.2px"></div>
<div class="gc" style="left:1177.5px;top:302.8px"></div>
<div class="gc" style="left:1209.8px;top:302.8px"></div>
<div class="gr" style="left:861.0px;width:50.0px;top:328.5px">SUM</div>
<div class="gi" style="left:910.3px;width:42px;top:328.0px"></div>
<div class="gi" style="left:953.4px;width:41px;top:328.0px"></div>
<div class="gi" style="left:999.3px;width:42px;top:328.0px"></div>
<div class="gi" style="left:1043.3px;width:42px;top:328.0px"></div>
<div class="gi" style="left:1087.3px;width:42px;top:328.0px"></div>
<div class="gi" style="left:1131.4px;width:42px;top:328.0px"></div>
<div class="gc" style="left:1177.5px;top:331.6px"></div>
<div class="gc" style="left:1209.8px;top:331.6px"></div>
<div class="gr" style="left:861.0px;width:50.0px;top:357.3px">Year</div>
<div class="gi" style="left:910.3px;width:42px;top:356.8px"></div>
<div class="gi" style="left:953.4px;width:41px;top:356.8px"></div>
<div class="gi" style="left:999.3px;width:42px;top:356.8px"></div>
<div class="gi" style="left:1043.3px;width:42px;top:356.8px"></div>
<div class="gi" style="left:1087.3px;width:42px;top:356.8px"></div>
<div class="gi" style="left:1131.4px;width:42px;top:356.8px"></div>
<div class="gc" style="left:1177.5px;top:360.4px"></div>
<div class="gc" style="left:1209.8px;top:360.4px"></div>
<div style="left:290.4px;top:392.5px;font-family:'DejaVu Sans',sans-serif;font-weight:bold;font-size:15.05px;line-height:20px;color:#2a2d39">Last Updated</div>
<div style="left:416.2px;top:391px;font-size:16.8px;letter-spacing:.22px;line-height:20px;color:#2f3440">2026-03-02 12:04:25</div>
<div class="sel" style="left:276.2px;width:194.5px;top:460px;height:23px"><span style="left:4.2px;letter-spacing:.1px">Default Columns</span><svg viewBox="0 0 12 8"><path d="M1.5 1.5 L6 6 L10.5 1.5" fill="none" stroke="#111" stroke-width="2" stroke-linecap="round" stroke-linejoin="round"/></svg></div>
<div class="btn" style="left:486.3px;width:104.4px;top:458px;line-height:34px"><span style="left:29.6px">Basic Grid</span></div>
<svg viewBox="0 0 20 20" preserveAspectRatio="none" style="left:493.3px;top:468.9px;width:20.0px;height:20.0px"><rect x="1" y="1" width="16.4" height="16.4" rx="1" fill="#f4f7fd" stroke="#a9b9e2" stroke-width="1.4"/><path d="M3 4 H15.4" stroke="#86b84a" stroke-width="1.1"/><path d="M3 6.6 H15.4 M3 9.4 H15.4 M3 12.2 H15.4 M3 15 H15.4" stroke="#aebce4" stroke-width="1.3"/><circle cx="15" cy="15.2" r="4.6" fill="#6ab544" stroke="#4b8f2c" stroke-width=".7"/><path d="M15 12.6 V17.8 M12.4 15.2 H17.6" stroke="#fff" stroke-width="1.5"/></svg>
<div class="btn" style="left:594.2px;width:134px;top:458px;line-height:34px"><span style="left:29.6px">Advanced Grid</span></div>
<svg viewBox="0 0 20 20" preserveAspectRatio="none" style="left:600.6px;top:468.9px;width:20.0px;height:20.0px"><rect x="1" y="1" width="16.4" height="16.4" rx="1" fill="#f4f7fd" stroke="#a9b9e2" stroke-width="1.4"/><path d="M3 4 H15.4" stroke="#86b84a" stroke-width="1.1"/><path d="M3 6.6 H15.4 M3 9.4 H15.4 M3 12.2 H15.4 M3 15 H15.4" stroke="#aebce4" stroke-width="1.3"/><path d="M5.6 19.2 L6.8 15.4 L15.6 6.6 Q16.8 5.6 18 6.8 Q19.2 8 18.2 9.2 L9.4 18 Z" fill="#f0b540" stroke="#c98a1e" stroke-width=".9"/><path d="M5.6 19.2 L6.8 15.4 L9.4 18 Z" fill="#f3dcae"/></svg>
<svg viewBox="0 0 20 20" preserveAspectRatio="none" style="left:734.0px;top:463.0px;width:17.7px;height:16.0px"><rect x="2.6" y="1" width="5.4" height="4.6" rx=".8" fill="#5d626b"/><rect x="12" y="1" width="5.4" height="4.6" rx=".8" fill="#5d626b"/><path d="M1.6 4.4 H9 L9.4 19 H0.4 Z" fill="#50555e"/><path d="M11 4.4 H18.4 L19.6 19 H10.6 Z" fill="#50555e"/><rect x="8.4" y="6.4" width="3.2" height="5.6" fill="#3d4149"/><rect x="0.8" y="12" width="8.4" height="6.6" fill="#8f959e"/><rect x="10.8" y="12" width="8.4" height="6.6" fill="#8f959e"/><rect x="2.8" y="13" width="4" height="4.8" fill="#5a5f68"/><rect x="13" y="13" width="4" height="4.8" fill="#5a5f68"/></svg>
<div class="lbl" style="left:756px;top:458.8px">Student</div>
<div style="left:828.5px;top:450.8px;font-size:13.6px;font-style:italic;letter-spacing:.18px;color:#333;line-height:16px">After Searching Press Enter, Tab or Click Out of Box</div>
<div style="left:826.8px;top:466px;width:332.2px;height:24.4px;background:#fdf9b9;border:1px solid #2a2a2a;font-size:16.8px;letter-spacing:.2px;line-height:24px;color:#b9b98f;padding-left:3.5px">Enter: Student</div>
<div id="grid"></div>
<div class="hc" style="left:271.0px;width:48.5px;padding-left:14px">Tag</div>
<div class="hc" style="left:319.5px;width:75.8px;padding-left:6px">Id #</div>
<div class="hc" style="left:395.3px;width:75.3px;padding-left:6px">Student...</div>
<div class="hc" style="left:470.6px;width:139.6px;padding-left:6px">Student</div>
<div class="hc" style="left:610.2px;width:75.8px;padding-left:6px">Class Id</div>
<div class="hc" style="left:686.0px;width:139.3px;padding-left:6px">Course</div>
<div class="hc" style="left:825.3px;width:62.5px;padding-left:6px">Teach...</div>
<div class="hc" style="left:887.8px;width:140.1px;padding-left:6px">Teacher</div>
<div class="hc" style="left:1027.9px;width:100.7px;padding-left:6px">Status</div>
<div class="hc" style="left:1128.6px;width:75.3px;text-align:right;padding-right:1px">Gp 1 Gr</div>
<div class="hc" style="left:1203.9px;width:75.1px;text-align:right;padding-right:1px">Gp 2 Gr</div>
<div class="hc" style="left:1279.0px;width:75.1px;text-align:right;padding-right:1px">Midterm...</div>
<div class="hc" style="left:1354.1px;width:75.2px;text-align:right;padding-right:1px">Gp 3 Gr</div>
<svg viewBox="0 0 14 10" style="left:1432px;top:515px;width:14px;height:10px"><path d="M1 9 L7 1 L13 9 Z" fill="#8a8a8a"/></svg>
<div style="left:1433px;top:532px;width:12px;height:22px;border-radius:6px;background:#7b7b7b"></div>
<div class="row" style="top:535px"><div class="c" style="left:0;width:48.5px;overflow:visible"><div class="cb"></div></div><div class="c l" style="left:48.5px;width:75.8px">41295</div><div class="c l" style="left:124.3px;width:75.3px">9978</div><div class="c l" style="left:199.6px;width:139.6px">Adams, Ashley</div><div class="c l" style="left:339.2px;width:75.8px">4725</div><div class="c l" style="left:415.0px;width:139.3px">DE Project Manag...</div><div class="c r" style="left:554.3px;width:62.5px">819</div><div class="c l" style="left:616.8px;width:140.1px">Mr. Baggett</div><div class="c l" style="left:756.9px;width:100.7px">Enrolled</div><div class="c r" style="left:857.6px;width:75.3px">92</div><div class="c r" style="left:932.9px;width:75.1px">90</div><div class="c r" style="left:1008.0px;width:75.1px">94</div><div class="c r" style="left:1083.1px;width:75.2px"></div></div>
<div class="row sel2" style="top:561px"><div class="c" style="left:0;width:48.5px;overflow:visible"><div class="cb"></div><svg viewBox="0 0 30 30" style="left:10px;top:-3px;width:30px;height:30px;z-index:3"><path d="M5 16.8 L9.6 13.2 L13 17.6 C16 11.5 20 6.5 26 1.8 L27.4 5.2 C22 11 18 18 14.8 26.2 Z" fill="#000"/></svg></div><div class="c l" style="left:48.5px;width:75.8px">41296</div><div class="c l" style="left:124.3px;width:75.3px">9978</div><div class="c l" style="left:199.6px;width:139.6px">Adams, Ashley</div><div class="c l" style="left:339.2px;width:75.8px">4718</div><div class="c l" style="left:415.0px;width:139.3px">Geometry Honors</div><div class="c r" style="left:554.3px;width:62.5px">1</div><div class="c l" style="left:616.8px;width:140.1px">Tech Support-1</div><div class="c l" style="left:756.9px;width:100.7px">Enrolled</div><div class="c r" style="left:857.6px;width:75.3px">92</div><div class="c r" style="left:932.9px;width:75.1px">92</div><div class="c r" style="left:1008.0px;width:75.1px">90</div><div class="c r" style="left:1083.1px;width:75.2px"></div></div>
<div class="row" style="top:587px"><div class="c" style="left:0;width:48.5px;overflow:visible"><div class="cb"></div></div><div class="c l" style="left:48.5px;width:75.8px">41297</div><div class="c l" style="left:124.3px;width:75.3px">9978</div><div class="c l" style="left:199.6px;width:139.6px">Adams, Ashley</div><div class="c l" style="left:339.2px;width:75.8px">4606</div><div class="c l" style="left:415.0px;width:139.3px">Keyboarding</div><div class="c r" style="left:554.3px;width:62.5px">1257</div><div class="c l" style="left:616.8px;width:140.1px">Mrs. Hillebrand</div><div class="c l" style="left:756.9px;width:100.7px">Enrolled</div><div class="c r" style="left:857.6px;width:75.3px">100</div><div class="c r" style="left:932.9px;width:75.1px">100</div><div class="c r" style="left:1008.0px;width:75.1px">98</div><div class="c r" style="left:1083.1px;width:75.2px"></div></div>
<div class="row alt" style="top:613px"><div class="c" style="left:0;width:48.5px;overflow:visible"><div class="cb"></div></div><div class="c l" style="left:48.5px;width:75.8px">41298</div><div class="c l" style="left:124.3px;width:75.3px">9978</div><div class="c l" style="left:199.6px;width:139.6px">Adams, Ashley</div><div class="c l" style="left:339.2px;width:75.8px">4747</div><div class="c l" style="left:415.0px;width:139.3px">Keyboarding I</div><div class="c r" style="left:554.3px;width:62.5px">0</div><div class="c l" style="left:616.8px;width:140.1px"></div><div class="c l" style="left:756.9px;width:100.7px">Enrolled</div><div class="c r" style="left:857.6px;width:75.3px"></div><div class="c r" style="left:932.9px;width:75.1px"></div><div class="c r" style="left:1008.0px;width:75.1px"></div><div class="c r" style="left:1083.1px;width:75.2px"></div></div>
<div class="row" style="top:639px"><div class="c" style="left:0;width:48.5px;overflow:visible"><div class="cb"></div></div><div class="c l" style="left:48.5px;width:75.8px">41299</div><div class="c l" style="left:124.3px;width:75.3px">9978</div><div class="c l" style="left:199.6px;width:139.6px">Adams, Ashley</div><div class="c l" style="left:339.2px;width:75.8px">4755</div><div class="c l" style="left:415.0px;width:139.3px">Software Dev C++...</div><div class="c r" style="left:554.3px;width:62.5px">819</div><div class="c l" style="left:616.8px;width:140.1px">Mr. Baggett</div><div class="c l" style="left:756.9px;width:100.7px">Enrolled</div><div class="c r" style="left:857.6px;width:75.3px">98</div><div class="c r" style="left:932.9px;width:75.1px">98</div><div class="c r" style="left:1008.0px;width:75.1px">96</div><div class="c r" style="left:1083.1px;width:75.2px"></div></div>
<div class="row alt" style="top:665px"><div class="c" style="left:0;width:48.5px;overflow:visible"><div class="cb"></div></div><div class="c l" style="left:48.5px;width:75.8px">40277</div><div class="c l" style="left:124.3px;width:75.3px">9917</div><div class="c l" style="left:199.6px;width:139.6px">Arthur, Joe</div><div class="c l" style="left:339.2px;width:75.8px">4665</div><div class="c l" style="left:415.0px;width:139.3px">04 Computer</div><div class="c r" style="left:554.3px;width:62.5px">1276</div><div class="c l" style="left:616.8px;width:140.1px">Mr. Marchuk</div><div class="c l" style="left:756.9px;width:100.7px">Enrolled</div><div class="c r" style="left:857.6px;width:75.3px">100</div><div class="c r" style="left:932.9px;width:75.1px"></div><div class="c r" style="left:1008.0px;width:75.1px"></div><div class="c r" style="left:1083.1px;width:75.2px"></div></div>
<div class="row" style="top:691px"><div class="c" style="left:0;width:48.5px;overflow:visible"><div class="cb"></div></div><div class="c l" style="left:48.5px;width:75.8px">40220</div><div class="c l" style="left:124.3px;width:75.3px">9917</div><div class="c l" style="left:199.6px;width:139.6px">Arthur, Joe</div><div class="c l" style="left:339.2px;width:75.8px">4736</div><div class="c l" style="left:415.0px;width:139.3px">Church Attendance</div><div class="c r" style="left:554.3px;width:62.5px">1214</div><div class="c l" style="left:616.8px;width:140.1px">Jennifer M.Glover</div><div class="c l" style="left:756.9px;width:100.7px">Enrolled</div><div class="c r" style="left:857.6px;width:75.3px"></div><div class="c r" style="left:932.9px;width:75.1px"></div><div class="c r" style="left:1008.0px;width:75.1px"></div><div class="c r" style="left:1083.1px;width:75.2px"></div></div>
<div class="row alt" style="top:717px"><div class="c" style="left:0;width:48.5px;overflow:visible"><div class="cb"></div></div><div class="c l" style="left:48.5px;width:75.8px">40201</div><div class="c l" style="left:124.3px;width:75.3px">9917</div><div class="c l" style="left:199.6px;width:139.6px">Arthur, Joe</div><div class="c l" style="left:339.2px;width:75.8px">4737</div><div class="c l" style="left:415.0px;width:139.3px">Math</div><div class="c r" style="left:554.3px;width:62.5px">1222</div><div class="c l" style="left:616.8px;width:140.1px">Ms. Patti</div><div class="c l" style="left:756.9px;width:100.7px">Enrolled</div><div class="c r" style="left:857.6px;width:75.3px"></div><div class="c r" style="left:932.9px;width:75.1px"></div><div class="c r" style="left:1008.0px;width:75.1px"></div><div class="c r" style="left:1083.1px;width:75.2px"></div></div>
<div class="row" style="top:743px"><div class="c" style="left:0;width:48.5px;overflow:visible"><div class="cb"></div></div><div class="c l" style="left:48.5px;width:75.8px">40258</div><div class="c l" style="left:124.3px;width:75.3px">9917</div><div class="c l" style="left:199.6px;width:139.6px">Arthur, Joe</div><div class="c l" style="left:339.2px;width:75.8px">4738</div><div class="c l" style="left:415.0px;width:139.3px">Math</div><div class="c r" style="left:554.3px;width:62.5px">1222</div><div class="c l" style="left:616.8px;width:140.1px">Ms. Patti</div><div class="c l" style="left:756.9px;width:100.7px">Enrolled</div><div class="c r" style="left:857.6px;width:75.3px"></div><div class="c r" style="left:932.9px;width:75.1px"></div><div class="c r" style="left:1008.0px;width:75.1px"></div><div class="c r" style="left:1083.1px;width:75.2px"></div></div>
<div class="row alt" style="top:769px"><div class="c" style="left:0;width:48.5px;overflow:visible"><div class="cb"></div></div><div class="c l" style="left:48.5px;width:75.8px">40239</div><div class="c l" style="left:124.3px;width:75.3px">9917</div><div class="c l" style="left:199.6px;width:139.6px">Arthur, Joe</div><div class="c l" style="left:339.2px;width:75.8px">4739</div><div class="c l" style="left:415.0px;width:139.3px">Physical Education</div><div class="c r" style="left:554.3px;width:62.5px">1222</div><div class="c l" style="left:616.8px;width:140.1px">Ms. Patti</div><div class="c l" style="left:756.9px;width:100.7px">Enrolled</div><div class="c r" style="left:857.6px;width:75.3px"></div><div class="c r" style="left:932.9px;width:75.1px"></div><div class="c r" style="left:1008.0px;width:75.1px"></div><div class="c r" style="left:1083.1px;width:75.2px"></div></div>
<div class="row" style="top:795px"><div class="c" style="left:0;width:48.5px;overflow:visible"><div class="cb"></div></div><div class="c l" style="left:48.5px;width:75.8px">41187</div><div class="c l" style="left:124.3px;width:75.3px">9512</div><div class="c l" style="left:199.6px;width:139.6px">Arthur, Steve</div><div class="c l" style="left:339.2px;width:75.8px">4694</div><div class="c l" style="left:415.0px;width:139.3px">P.E. Boys</div><div class="c r" style="left:554.3px;width:62.5px">949</div><div class="c l" style="left:616.8px;width:140.1px">Mr. McGaha</div><div class="c l" style="left:756.9px;width:100.7px">Enrolled</div><div class="c r" style="left:857.6px;width:75.3px"></div><div class="c r" style="left:932.9px;width:75.1px"></div><div class="c r" style="left:1008.0px;width:75.1px"></div><div class="c r" style="left:1083.1px;width:75.2px"></div></div>
<div class="row alt" style="top:821px"><div class="c" style="left:0;width:48.5px;overflow:visible"><div class="cb"></div></div><div class="c l" style="left:48.5px;width:75.8px">40902</div><div class="c l" style="left:124.3px;width:75.3px">9512</div><div class="c l" style="left:199.6px;width:139.6px">Arthur, Steve</div><div class="c l" style="left:339.2px;width:75.8px">4696</div><div class="c l" style="left:415.0px;width:139.3px">Algebra I</div><div class="c r" style="left:554.3px;width:62.5px">831</div><div class="c l" style="left:616.8px;width:140.1px">Mrs. McFall</div><div class="c l" style="left:756.9px;width:100.7px">Enrolled</div><div class="c r" style="left:857.6px;width:75.3px"></div><div class="c r" style="left:932.9px;width:75.1px"></div><div class="c r" style="left:1008.0px;width:75.1px"></div><div class="c r" style="left:1083.1px;width:75.2px"></div></div>
<div class="row" style="top:847px"><div class="c" style="left:0;width:48.5px;overflow:visible"><div class="cb"></div></div><div class="c l" style="left:48.5px;width:75.8px">40921</div><div class="c l" style="left:124.3px;width:75.3px">9512</div><div class="c l" style="left:199.6px;width:139.6px">Arthur, Steve</div><div class="c l" style="left:339.2px;width:75.8px">4601</div><div class="c l" style="left:415.0px;width:139.3px">Algebra I Honors</div><div class="c r" style="left:554.3px;width:62.5px">1257</div><div class="c l" style="left:616.8px;width:140.1px">Mrs. Hillebrand</div><div class="c l" style="left:756.9px;width:100.7px">Enrolled</div><div class="c r" style="left:857.6px;width:75.3px"></div><div class="c r" style="left:932.9px;width:75.1px"></div><div class="c r" style="left:1008.0px;width:75.1px"></div><div class="c r" style="left:1083.1px;width:75.2px"></div></div>
<div class="row alt" style="top:873px"><div class="c" style="left:0;width:48.5px;overflow:visible"><div class="cb"></div></div><div class="c l" style="left:48.5px;width:75.8px">40940</div><div class="c l" style="left:124.3px;width:75.3px">9512</div><div class="c l" style="left:199.6px;width:139.6px">Arthur, Steve</div><div class="c l" style="left:339.2px;width:75.8px">4697</div><div class="c l" style="left:415.0px;width:139.3px">Algebra I Honors</div><div class="c r" style="left:554.3px;width:62.5px">1257</div><div class="c l" style="left:616.8px;width:140.1px">Mrs. Hillebrand</div><div class="c l" style="left:756.9px;width:100.7px">Enrolled</div><div class="c r" style="left:857.6px;width:75.3px"></div><div class="c r" style="left:932.9px;width:75.1px"></div><div class="c r" style="left:1008.0px;width:75.1px"></div><div class="c r" style="left:1083.1px;width:75.2px"></div></div>
<div class="row" style="top:899px"><div class="c" style="left:0;width:48.5px;overflow:visible"><div class="cb"></div></div><div class="c l" style="left:48.5px;width:75.8px">40959</div><div class="c l" style="left:124.3px;width:75.3px">9512</div><div class="c l" style="left:199.6px;width:139.6px">Arthur, Steve</div><div class="c l" style="left:339.2px;width:75.8px">4698</div><div class="c l" style="left:415.0px;width:139.3px">Biology I</div><div class="c r" style="left:554.3px;width:62.5px">1227</div><div class="c l" style="left:616.8px;width:140.1px">Dr. Jones</div><div class="c l" style="left:756.9px;width:100.7px">Enrolled</div><div class="c r" style="left:857.6px;width:75.3px"></div><div class="c r" style="left:932.9px;width:75.1px"></div><div class="c r" style="left:1008.0px;width:75.1px"></div><div class="c r" style="left:1083.1px;width:75.2px"></div></div>
<div class="row alt" style="top:925px"><div class="c" style="left:0;width:48.5px;overflow:visible"><div class="cb"></div></div><div class="c l" style="left:48.5px;width:75.8px">40978</div><div class="c l" style="left:124.3px;width:75.3px">9512</div><div class="c l" style="left:199.6px;width:139.6px">Arthur, Steve</div><div class="c l" style="left:339.2px;width:75.8px">4699</div><div class="c l" style="left:415.0px;width:139.3px">Biology I Honors</div><div class="c r" style="left:554.3px;width:62.5px">1180</div><div class="c l" style="left:616.8px;width:140.1px">Mr. Burke</div><div class="c l" style="left:756.9px;width:100.7px">Enrolled</div><div class="c r" style="left:857.6px;width:75.3px"></div><div class="c r" style="left:932.9px;width:75.1px"></div><div class="c r" style="left:1008.0px;width:75.1px"></div><div class="c r" style="left:1083.1px;width:75.2px"></div></div>
<div class="row" style="top:951px"><div class="c" style="left:0;width:48.5px;overflow:visible"><div class="cb"></div></div><div class="c l" style="left:48.5px;width:75.8px">40997</div><div class="c l" style="left:124.3px;width:75.3px">9512</div><div class="c l" style="left:199.6px;width:139.6px">Arthur, Steve</div><div class="c l" style="left:339.2px;width:75.8px">4700</div><div class="c l" style="left:415.0px;width:139.3px">Computers I</div><div class="c r" style="left:554.3px;width:62.5px">1214</div><div class="c l" style="left:616.8px;width:140.1px">Jennifer M.Glover</div><div class="c l" style="left:756.9px;width:100.7px">Enrolled</div><div class="c r" style="left:857.6px;width:75.3px"></div><div class="c r" style="left:932.9px;width:75.1px"></div><div class="c r" style="left:1008.0px;width:75.1px"></div><div class="c r" style="left:1083.1px;width:75.2px"></div></div>
<div class="row alt" style="top:977px"><div class="c" style="left:0;width:48.5px;overflow:visible"><div class="cb"></div></div><div class="c l" style="left:48.5px;width:75.8px">41016</div><div class="c l" style="left:124.3px;width:75.3px">9512</div><div class="c l" style="left:199.6px;width:139.6px">Arthur, Steve</div><div class="c l" style="left:339.2px;width:75.8px">4701</div><div class="c l" style="left:415.0px;width:139.3px">English I</div><div class="c r" style="left:554.3px;width:62.5px">1228</div><div class="c l" style="left:616.8px;width:140.1px">Mrs. Bowen</div><div class="c l" style="left:756.9px;width:100.7px">Enrolled</div><div class="c r" style="left:857.6px;width:75.3px"></div><div class="c r" style="left:932.9px;width:75.1px"></div><div class="c r" style="left:1008.0px;width:75.1px"></div><div class="c r" style="left:1083.1px;width:75.2px"></div></div>
</body></html>
